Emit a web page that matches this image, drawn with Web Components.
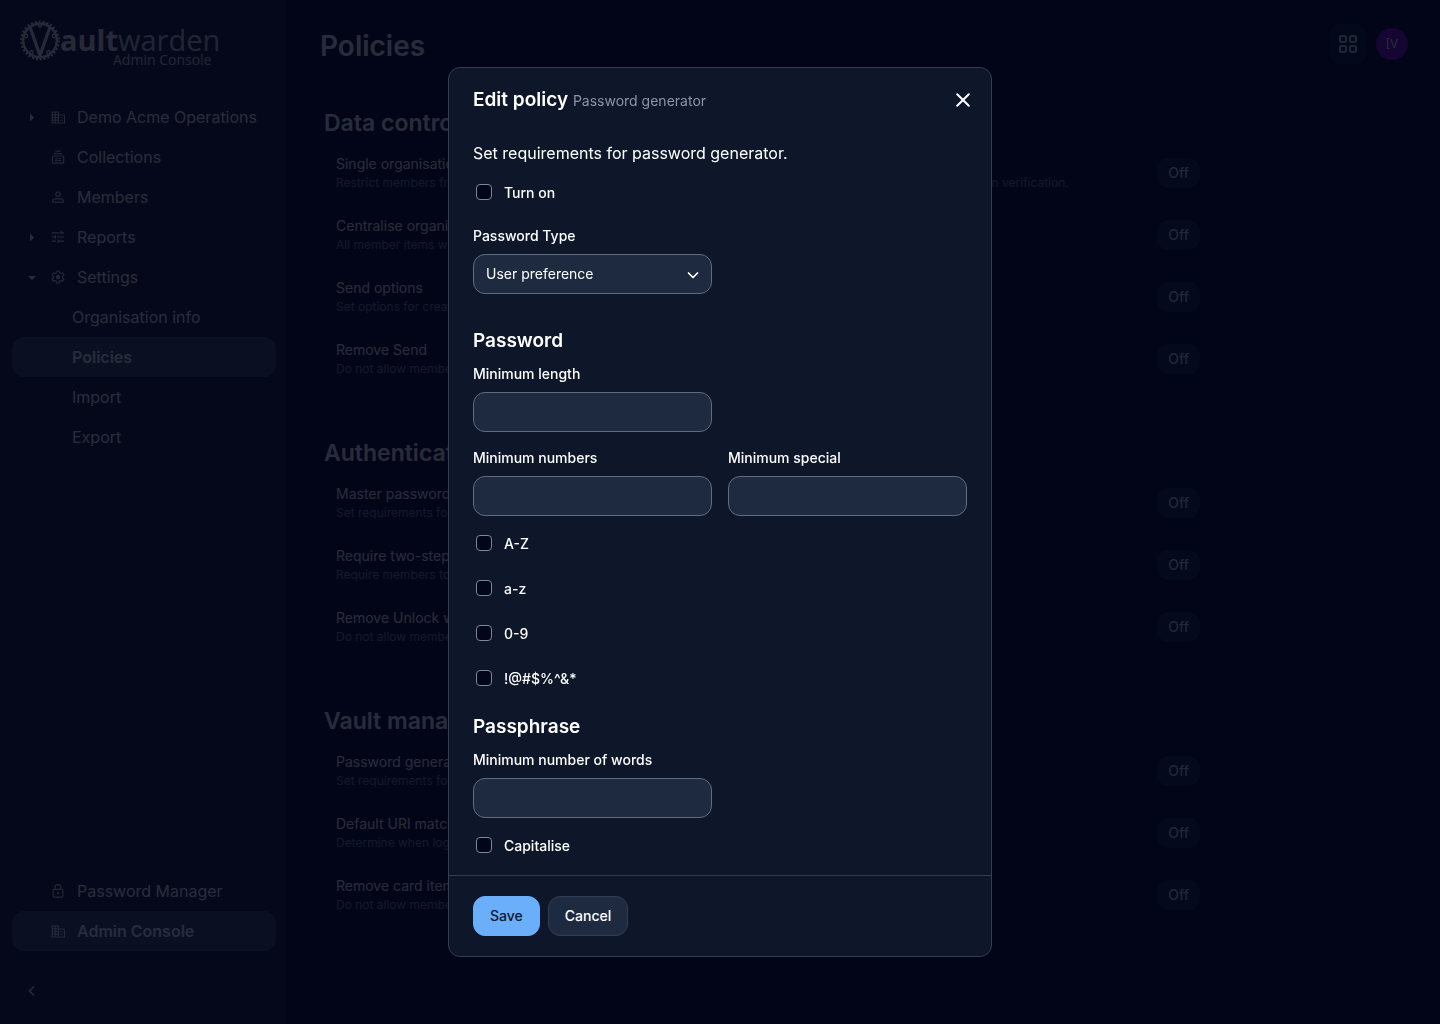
<!DOCTYPE html>
<html lang="en-GB">
<head>
<meta charset="utf-8">
<title>Policies | Vaultwarden Admin Console</title>
<style>
  :root {
    --bg: #020618;
    --surface: #0f172b;
    --surface-raised: #1e2a3f;
    --surface-active: #38465c;
    --line: #323e50;
    --line-strong: #5f6c80;
    --fg: #ffffff;
    --fg-muted: #8c95a8;
    --primary: #6baefa;
    --scrim: rgba(2, 6, 24, .85);
  }
  body {
    margin: 0;
    background: var(--bg);
    color: var(--fg);
    font: 400 14px/20px Inter, "Liberation Sans", sans-serif;
  }
</style>
</head>
<body>
<admin-app></admin-app>

<script>
const define = (name, html, setup) => {
  const template = document.createElement('template');
  template.innerHTML = '<style>*,*::before,*::after{box-sizing:border-box}:host([hidden]){display:none}</style>' + html;
  customElements.define(name, class extends HTMLElement {
    connectedCallback() {
      if (this.shadowRoot) return;
      const root = this.attachShadow({ mode: 'open' });
      root.append(template.content.cloneNode(true));
      if (setup) setup(this, root);
    }
  });
};

const ICONS = {
  building: '<g fill="none" stroke="currentColor" stroke-width="1.2"><path d="M1.2 2h6.2v11H1.2zM7.4 5h6.2v8H7.4M4.3 2v11M1.2 4.8h6.2M1.2 7.5h6.2M1.2 10.2h6.2"/><path d="M9.3 7.6h2.6M9.3 10.4h2.6" stroke-dasharray="1 .8"/></g>',
  collection: '<g fill="none" stroke="currentColor" stroke-width="1.2"><path d="M4.5 1.2h5M3 3.6h8"/><rect x="1.4" y="6" width="11.2" height="7.2" rx="1"/></g><path fill="currentColor" d="M4.4 8h2v1.2h-2zM7.7 8h2v1.2h-2zM3.9 10h2.8v1.2H3.9zM7.3 10h2.8v1.2H7.3z"/>',
  user: '<g fill="none" stroke="currentColor" stroke-width="1.2"><circle cx="7" cy="4.2" r="2.2"/><path d="M3.8 8.8h6.4a2 2 0 0 1 2 2v1.4H1.8v-1.4a2 2 0 0 1 2-2z"/></g>',
  sliders: '<g fill="none" stroke="currentColor" stroke-width="1.2"><path d="M1 2.8h7M10 2.8h3M10 1v3.6M1 7h3M6 7h7M4.4 5.2v3.6M1 11.2h4M7.2 11.2H13M7.2 9.4V13"/></g>',
  gear: '<path fill="none" stroke="currentColor" stroke-width="1.2" stroke-linejoin="round" d="M5.7 1h2.6l.4 1.7 1.2.7 1.7-.5 1.3 2.2L11.6 6.3v1.4l1.3 1.2-1.3 2.2-1.7-.5-1.2.7-.4 1.7H5.7l-.4-1.7-1.2-.7-1.7.5-1.3-2.2 1.3-1.2V6.3L1.1 5.1l1.3-2.2 1.7.5 1.2-.7z"/><circle cx="7" cy="7" r="2.2" fill="currentColor"/>',
  lock: '<g fill="none" stroke="currentColor" stroke-width="1.2"><rect x="2.2" y="5.4" width="9.6" height="7.8" rx="1"/><path d="M4 5.4V3.6a3 3 0 0 1 6 0v1.8"/></g><circle cx="7" cy="9.2" r="1.1" fill="currentColor"/>'
};

define('brand-logo', `
<style>
  :host { display: block; }
  a { display: block; }
  svg { display: block; }
  text { font-family: "Open Sans", "Noto Sans", sans-serif; }
</style>
<a href="#home" aria-label="Vaultwarden Admin Console">
<svg width="204" height="54" viewBox="0 0 204 54" fill="#f2f2f2">
  <g fill="none" stroke="#f2f2f2">
    <circle cx="21" cy="24.5" r="16.800" stroke-width="2.4"/>
    <circle cx="21" cy="24.5" r="18.800" stroke-width="2.2" stroke-dasharray="1.97 1.97"/>
    <g stroke-width="1.4"><circle cx="21" cy="9.500" r="1.700"/><circle cx="7" cy="20" r="1.700"/><circle cx="35" cy="20" r="1.700"/><circle cx="12.500" cy="36.500" r="1.700"/><circle cx="29.500" cy="36.500" r="1.700"/></g>
  </g>
  <path d="M9.300 11h3.400L21 34.500 29.300 11h3.400L22.600 40h-3.200z"/>
  <text x="41" y="35" font-size="29" font-weight="700">ault</text>
  <text x="99" y="35" font-size="29" font-weight="400" opacity=".85">warden</text>
  <text x="94" y="49" font-size="14" font-weight="400" opacity=".9">Admin Console</text>
</svg>
</a>`);

define('nav-item', `
<style>
  :host { display: block; }
  a {
    display: flex; align-items: center; height: 40px; padding: 0 12px 0 14px;
    border-radius: 12px; color: inherit; text-decoration: none;
    font-size: 16px; line-height: 24px; font-weight: 400;
  }
  .caret { width: 12px; height: 12px; margin-right: 13px; }
  .icon { width: 14px; height: 14px; margin-right: 12px; opacity: .85; }
  :host([child]) a { padding-left: 60px; }
  :host([child]) svg { display: none; }
  :host([active]) a { background: var(--surface-active); font-weight: 600; }
</style>
<a href="#"><svg class="caret" viewBox="0 0 12 12" aria-hidden="true"></svg><svg class="icon" viewBox="0 0 14 14" aria-hidden="true"></svg><slot></slot></a>`,
(host, root) => {
  const caret = { right: 'M4 2.5l4 4-4 4z', down: 'M2 5h8l-4 4z' }[host.getAttribute('caret')];
  if (caret) root.querySelector('.caret').innerHTML = `<path fill="currentColor" d="${caret}"/>`;
  root.querySelector('.icon').innerHTML = ICONS[host.getAttribute('icon')] || '';
  if (host.hasAttribute('active')) root.querySelector('a').setAttribute('aria-current', 'page');
});

define('side-nav', `
<style>
  :host { display: block; flex: none; width: 286px; min-height: 100vh; background: var(--surface); }
  nav { display: flex; flex-direction: column; min-height: 100vh; padding: 16px 10px 13px 12px; }
  brand-logo { margin: 0 0 27px 7px; }
  .bottom { margin-top: auto; }
  button { display: flex; margin: 20px 0 0; padding: 12px; border: 0; background: none; color: inherit; }
</style>
<nav aria-label="Main">
  <brand-logo></brand-logo>
  <nav-item caret="right" icon="building">Demo Acme Operations</nav-item>
  <nav-item icon="collection">Collections</nav-item>
  <nav-item icon="user">Members</nav-item>
  <nav-item caret="right" icon="sliders">Reports</nav-item>
  <nav-item caret="down" icon="gear">Settings</nav-item>
  <nav-item child>Organisation info</nav-item>
  <nav-item child active>Policies</nav-item>
  <nav-item child>Import</nav-item>
  <nav-item child>Export</nav-item>
  <div class="bottom">
    <nav-item icon="lock">Password Manager</nav-item>
    <nav-item icon="building" active>Admin Console</nav-item>
    <button type="button" aria-label="Collapse side navigation"><svg width="16" height="16" viewBox="0 0 16 16" fill="none" stroke="currentColor" stroke-width="1.5"><path d="M10 3.5L5.5 8l4.500 4.500"/></svg></button>
  </div>
</nav>`);

define('page-header', `
<style>
  :host { display: flex; align-items: flex-start; justify-content: space-between; }
  h1 { margin: 0; font-size: 28px; line-height: 44px; font-weight: 600; }
  .actions { display: flex; align-items: center; gap: 10px; }
  button { display: flex; align-items: center; justify-content: center; padding: 0; border: 0; color: inherit; font: inherit; }
  .apps { width: 36px; height: 40px; border-radius: 12px; background: #0b162b; }
  .avatar { width: 32px; height: 32px; border-radius: 50%; background: #7a00cc; font-size: 12px; line-height: 16px; font-weight: 400; }
</style>
<h1><slot></slot></h1>
<div class="actions">
  <button class="apps" type="button" aria-label="Switch products"><svg width="20" height="20" viewBox="0 0 20 20" fill="none" stroke="currentColor" stroke-width="1.7"><rect x="2" y="2" width="6" height="6" rx="1.2"/><rect x="12" y="2" width="6" height="6" rx="1.2"/><rect x="2" y="12" width="6" height="6" rx="1.2"/><rect x="12" y="12" width="6" height="6" rx="1.2"/></svg></button>
  <button class="avatar" type="button">[V</button>
</div>`);

define('policy-row', `
<style>
  :host { display: flex; align-items: center; justify-content: space-between; padding: 12px; }
  button { display: block; padding: 0; border: 0; background: none; color: inherit; font: 400 14px/20px Inter, "Liberation Sans", sans-serif; }
  p { margin: 0; font-size: 12px; line-height: 18px; color: #7485a0; }
  .badge { padding: 5px 11px; border-radius: 12px; background: #111c34; font-weight: 500; color: #d5dbe6; }
</style>
<div><button type="button"></button><p><slot></slot></p></div>
<span class="badge">Off</span>`,
(host, root) => { root.querySelector('button').textContent = host.getAttribute('name'); });

define('policy-section', `
<style>
  :host { display: block; }
  h2 { margin: 0 0 2px; font-size: 23px; line-height: 34px; font-weight: 600; }
</style>
<section><h2></h2><slot></slot></section>`,
(host, root) => { root.querySelector('h2').textContent = host.getAttribute('heading'); });

define('text-field', `
<style>
  :host { display: block; margin-bottom: 16px; }
  label { display: block; margin-bottom: 8px; font-weight: 500; }
  input {
    display: block; width: 100%; height: 40px; padding: 0 12px;
    border: 1px solid var(--line-strong); border-radius: 12px;
    background: var(--surface-raised); color: inherit; font: inherit; appearance: textfield;
  }
</style>
<label for="control"><slot></slot></label>
<input id="control" type="number">`);

define('select-field', `
<style>
  :host { display: block; margin-bottom: 16px; }
  label { display: block; margin-bottom: 8px; font-weight: 500; }
  .box { display: grid; align-items: center; }
  select, svg { grid-area: 1 / 1; }
  select {
    width: 100%; height: 40px; padding: 0 36px 0 12px;
    border: 1px solid var(--line-strong); border-radius: 12px;
    background: var(--surface-raised); color: inherit; font: inherit; appearance: none;
  }
  svg { justify-self: end; margin-right: 12px; pointer-events: none; }
</style>
<label for="control"><slot></slot></label>
<div class="box">
  <select id="control"><option>User preference</option></select>
  <svg width="14" height="14" viewBox="0 0 14 14" fill="none" stroke="currentColor" stroke-width="1.7" stroke-linecap="round" stroke-linejoin="round" aria-hidden="true"><path d="M2.5 6L7 10.5 11.5 6"/></svg>
</div>`);

define('check-field', `
<style>
  :host { display: block; padding: 2px 0 23px 3px; }
  div { display: flex; align-items: center; gap: 12px; }
  input {
    appearance: none; width: 16px; height: 16px; margin: 0 0 2px;
    border: 1px solid #7c8799; border-radius: 4px; background: var(--bg);
  }
  input:checked { background: var(--primary); }
  label { font-weight: 500; }
</style>
<div><input id="control" type="checkbox"><label for="control"><slot></slot></label></div>`);

define('app-button', `
<style>
  :host { display: block; }
  button {
    display: block; height: 40px; padding: 0 16px; border: 1px solid var(--line); border-radius: 12px;
    background: var(--surface-raised); color: var(--fg); font: inherit; font-weight: 500;
  }
  :host([primary]) button { border-color: var(--primary); background: var(--primary); color: #0d172b; }
</style>
<button type="button"><slot></slot></button>`);

define('modal-dialog', `
<style>
  :host {
    position: fixed; inset: 0; display: flex; align-items: center; justify-content: center;
    padding: 67px 16px; background: var(--scrim);
  }
  .dialog {
    display: flex; flex-direction: column; width: 100%; max-width: 544px; max-height: 100%;
    border: 1px solid var(--line); border-radius: 12px; background: #0e1729; overflow: hidden;
  }
  header { display: flex; align-items: center; justify-content: space-between; padding: 16px 12px 16px 24px; }
  h1 { margin: 0; font-size: 19px; line-height: 28px; font-weight: 600; }
  small { font-size: 14px; line-height: 20px; font-weight: 400; color: var(--fg-muted); }
  .close { display: flex; padding: 4px; border: 0; background: none; color: inherit; }
  .body { flex: 1; min-height: 0; overflow: auto; scrollbar-width: none; padding: 9px 24px 0; }
  footer { display: flex; gap: 8px; padding: 20px 24px; border-top: 1px solid var(--line); }
</style>
<div class="dialog" role="dialog" aria-modal="true" aria-labelledby="title">
  <header>
    <h1 id="title">Edit policy <small>Password generator</small></h1>
    <button class="close" type="button" aria-label="Close"><svg width="24" height="24" viewBox="0 0 24 24" fill="none" stroke="currentColor" stroke-width="2" stroke-linecap="round"><path d="M6.2 6.2l11.6 11.6M17.8 6.2L6.2 17.8"/></svg></button>
  </header>
  <div class="body"><slot></slot></div>
  <footer><slot name="footer"></slot></footer>
</div>`);

define('policy-form', `
<style>
  :host { display: block; }
  p { margin: 0 0 16px; font-size: 16px; line-height: 24px; font-weight: 400; }
  h2 { margin: 0 0 8px; font-size: 19px; line-height: 30px; font-weight: 600; }
  .grid { display: grid; grid-template-columns: 1fr 1fr; column-gap: 16px; }
  .first { margin-top: 16px; }
  .half { grid-column: 1; }
</style>
<form>
  <p>Set requirements for password generator.</p>
  <check-field>Turn on</check-field>
  <div class="grid"><select-field>Password Type</select-field></div>
  <section class="first">
    <h2>Password</h2>
    <div class="grid">
      <text-field class="half">Minimum length</text-field>
      <text-field class="half">Minimum numbers</text-field>
      <text-field>Minimum special</text-field>
    </div>
    <check-field>A-Z</check-field>
    <check-field>a-z</check-field>
    <check-field>0-9</check-field>
    <check-field>!@#$%^&amp;*</check-field>
  </section>
  <section>
    <h2>Passphrase</h2>
    <div class="grid"><text-field>Minimum number of words</text-field></div>
    <check-field>Capitalise</check-field>
  </section>
</form>`);

define('admin-app', `
<style>
  :host { display: flex; min-height: 100vh; }
  main { flex: 1; min-width: 0; padding: 24px 32px 24px 34px; }
  page-header { margin-bottom: 38px; }
  .sections { display: grid; gap: 46px; max-width: 888px; margin-left: 4px; }
</style>
<side-nav></side-nav>
<main>
  <page-header>Policies</page-header>
  <div class="sections">
    <policy-section heading="Data controls">
      <policy-row name="Single organisation">Restrict members from joining other organisations. This policy is required for organisations that have enabled domain verification.</policy-row>
      <policy-row name="Centralise organisation ownership">All member items will be owned and managed by the organisation.</policy-row>
      <policy-row name="Send options">Set options for creating and editing Sends.</policy-row>
      <policy-row name="Remove Send">Do not allow members to create or edit Sends.</policy-row>
    </policy-section>
    <policy-section heading="Authentication">
      <policy-row name="Master password requirements">Set requirements for master password strength.</policy-row>
      <policy-row name="Require two-step login">Require members to set up two-step login.</policy-row>
      <policy-row name="Remove Unlock with PIN">Do not allow members to unlock their account with a PIN.</policy-row>
    </policy-section>
    <policy-section heading="Vault management">
      <policy-row name="Password generator">Set requirements for password generator.</policy-row>
      <policy-row name="Default URI match detection">Determine when logins are suggested for autofill.</policy-row>
      <policy-row name="Remove card item type">Do not allow members to create card item types.</policy-row>
    </policy-section>
  </div>
</main>
<modal-dialog>
  <policy-form></policy-form>
  <app-button slot="footer" primary>Save</app-button>
  <app-button slot="footer">Cancel</app-button>
</modal-dialog>`);
</script>
</body>
</html>
